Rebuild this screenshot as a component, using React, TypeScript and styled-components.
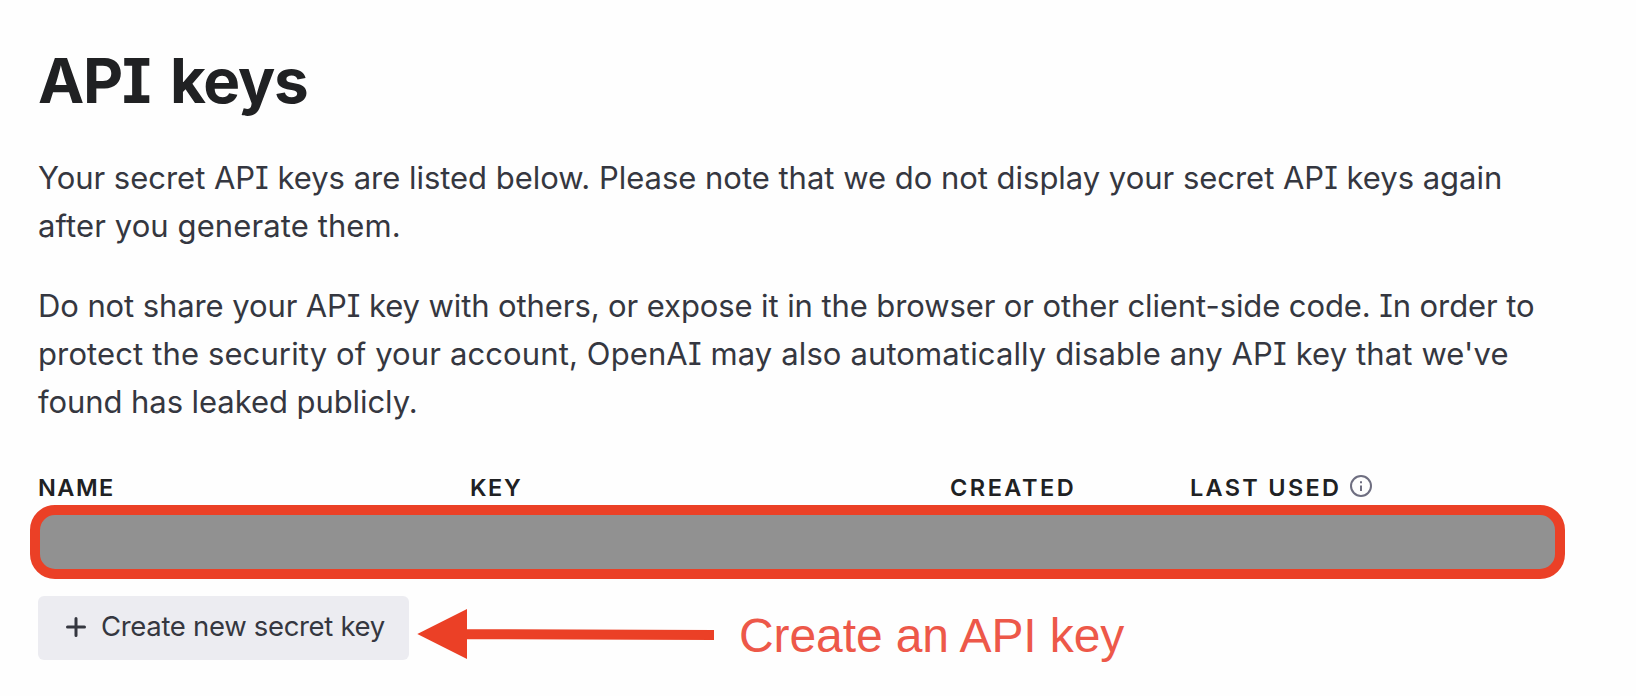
import React from 'react';
import styled, { createGlobalStyle } from 'styled-components';

const GlobalStyle = createGlobalStyle`
  *, *::before, *::after { box-sizing: border-box; }
  body {
    margin: 0;
    background: #fefefe;
    font-family: Inter, 'Liberation Sans', sans-serif;
    font-feature-settings: 'cv08' 1, 'calt' 0;
  }
`;

const Page = styled.main`
  width: 1636px;
  height: 696px;
  padding: 49px 71px 0 38px;
  overflow: hidden;
`;

const Title = styled.h1`
  margin: 0 0 41px;
  font-size: 62px;
  line-height: 64px;
  font-weight: 700;
  letter-spacing: -1.2px;
  word-spacing: 6px;
  color: #202123;
`;

const Paragraph = styled.p`
  margin: 0 0 32px;
  font-size: 31px;
  line-height: 48px;
  color: #353740;
`;

const Line = styled.span<{ $spacing: number }>`
  display: block;
  white-space: nowrap;
  letter-spacing: ${(p) => p.$spacing}px;
`;

const HeaderRow = styled.div`
  display: grid;
  grid-template-columns: 432px 480px 240px 1fr;
  height: 29px;
  margin-top: 50px;
`;

const HeaderCell = styled.div<{ $spacing: number }>`
  display: flex;
  align-items: flex-start;
  font-size: 23.5px;
  line-height: 24px;
  font-weight: 600;
  letter-spacing: ${(p) => p.$spacing}px;
  white-space: nowrap;
  color: #202123;
`;

const InfoIcon = styled.svg`
  flex: none;
  width: 24px;
  height: 24px;
  margin: -2px 0 0 8px;
`;

const RedactedRow = styled.div`
  height: 74px;
  margin: 0 0 17px -8px;
  width: 1535px;
  border: 10px solid #eb4026;
  border-radius: 25px;
  background: #919191;
`;

const ActionRow = styled.div`
  display: flex;
  align-items: flex-start;
  height: 80px;
`;

const CreateButton = styled.button`
  display: flex;
  align-items: center;
  flex: none;
  width: 371px;
  height: 64px;
  padding: 0 0 4px 27px;
  border: 0;
  border-radius: 6px;
  background: #ececf1;
  color: #353740;
  font: inherit;
  font-size: 27.5px;
  letter-spacing: -0.32px;
  white-space: nowrap;
`;

const PlusIcon = styled.svg`
  flex: none;
  width: 22px;
  height: 22px;
  margin: 1px 14px 0 0;
`;

const Arrow = styled.svg`
  flex: none;
  width: 298px;
  height: 52px;
  margin: 12px 0 0 8px;
`;

const Annotation = styled.span`
  margin: 13px 0 0 24px;
  font-family: 'Liberation Sans', Arial, sans-serif;
  font-size: 48px;
  line-height: 54px;
  letter-spacing: -0.1px;
  white-space: nowrap;
  color: #ed5849;
`;

export default function App() {
  return (
    <Page>
      <GlobalStyle />
      <Title>API keys</Title>
      <Paragraph>
        <Line $spacing={-0.02}>
          Your secret API keys are listed below. Please note that we do not display your secret API keys again
        </Line>
        <Line $spacing={0.1}>after you generate them.</Line>
      </Paragraph>
      <Paragraph>
        <Line $spacing={-0.1}>
          Do not share your API key with others, or expose it in the browser or other client-side code. In order to
        </Line>
        <Line $spacing={0.12}>
          protect the security of your account, OpenAI may also automatically disable any API key that we've
        </Line>
        <Line $spacing={-0.07}>found has leaked publicly.</Line>
      </Paragraph>
      <HeaderRow>
        <HeaderCell $spacing={1.5}>NAME</HeaderCell>
        <HeaderCell $spacing={1.6}>KEY</HeaderCell>
        <HeaderCell $spacing={2.5}>CREATED</HeaderCell>
        <HeaderCell $spacing={2.3}>
          LAST USED
          <InfoIcon viewBox="0 0 24 24" fill="none" stroke="#6e6e80" strokeWidth="2">
            <circle cx="12" cy="12" r="10" />
            <path d="M12 11.5V17" />
            <path d="M12 7.2V9.2" />
          </InfoIcon>
        </HeaderCell>
      </HeaderRow>
      <RedactedRow />
      <ActionRow>
        <CreateButton>
          <PlusIcon viewBox="0 0 22 22" stroke="#353740" strokeWidth="3" strokeLinecap="round">
            <path d="M11 2.5V19.5M2.5 11H19.5" />
          </PlusIcon>
          Create new secret key
        </CreateButton>
        <Arrow viewBox="0 0 298 52" fill="#eb4026">
          <path d="M0.3 26L50 1V21.2L297 22V32L50 31.2V51Z" />
        </Arrow>
        <Annotation>Create an API key</Annotation>
      </ActionRow>
    </Page>
  );
}
